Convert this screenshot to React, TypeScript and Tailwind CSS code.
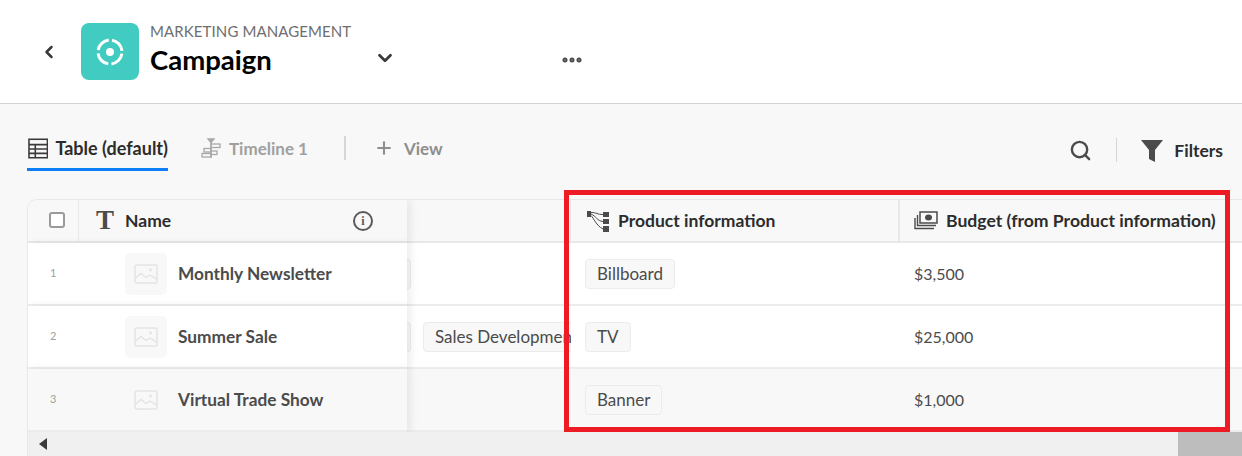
import { ChevronDown, ChevronLeft, Ellipsis, Plus, Search } from "lucide-react";

const font = "font-['Lato','Noto_Sans',sans-serif]";

function TableIcon() {
  return (
    <svg width="21" height="21" viewBox="0 0 21 21" fill="none" stroke="#3a3a3a" strokeWidth="1.6">
      <rect x="1" y="1" width="19" height="19" />
      <path d="M1 6.5h19M1 11h19M1 15.5h19M7.5 6.5V20" />
    </svg>
  );
}

function TimelineIcon() {
  return (
    <svg width="21" height="21" viewBox="0 0 21 21" fill="none" stroke="#a8a8a8" strokeWidth="1.3">
      <path d="M7 1h6l-3 3.5z" fill="#a8a8a8" />
      <path d="M10 4v16" />
      <rect x="10" y="6" width="9" height="3.5" />
      <rect x="3" y="10.5" width="7" height="3.5" />
      <rect x="1" y="15.5" width="9" height="3.5" />
      <rect x="10" y="13" width="6" height="3.5" />
    </svg>
  );
}

function ImagePlaceholder() {
  return (
    <svg width="24" height="20" viewBox="0 0 24 20" fill="none" stroke="#e3e3e3" strokeWidth="1.4">
      <rect x="1" y="1" width="22" height="18" rx="1.5" />
      <path d="M1 14.5l6-5 5 4 4-2.5 7 4.5" />
      <circle cx="16.5" cy="6" r="1.4" fill="#e3e3e3" stroke="none" />
    </svg>
  );
}

function ProductIcon() {
  return (
    <svg width="22" height="22" viewBox="0 0 22 22" fill="none">
      <rect x="0" y="1" width="4" height="6" fill="#4b4b4b" />
      <rect x="16" y="2" width="6" height="5" fill="#4b4b4b" />
      <rect x="16" y="9" width="6" height="5" fill="#4b4b4b" />
      <rect x="16" y="16" width="6" height="6" fill="#4b4b4b" />
      <path d="M4 2.5c6 0 6 2 12 2M4 4c5 2 6 7 12 7.5M4 5.5c3 3 5 10 12 13.5" stroke="#4b4b4b" strokeWidth="1" />
    </svg>
  );
}

function BudgetIcon() {
  return (
    <svg width="24" height="19" viewBox="0 0 24 19" fill="none" stroke="#4b4b4b">
      <rect x="6" y="1" width="17" height="11" strokeWidth="1.5" />
      <ellipse cx="14.5" cy="6.5" rx="3.5" ry="3" fill="#4b4b4b" stroke="none" />
      <path d="M3.5 4v10.5H22M1 7v10.5h19" strokeWidth="1.4" />
    </svg>
  );
}

function Tag({ label }: { label: string }) {
  return (
    <span className="flex h-[30px] shrink-0 items-center whitespace-nowrap rounded-[4px] border border-[#ececec] bg-[#f8f8f8] px-[11px] text-[17px] text-[#4b4b4b]">
      {label}
    </span>
  );
}

const rows = [
  { id: 1, name: "Monthly Newsletter", product: "Billboard", budget: "$3,500", thumb: true, bg: "bg-white", sales: false, stub: true },
  { id: 2, name: "Summer Sale", product: "TV", budget: "$25,000", thumb: true, bg: "bg-white", sales: true, stub: true },
  { id: 3, name: "Virtual Trade Show", product: "Banner", budget: "$1,000", thumb: false, bg: "bg-[#f8f8f8]", sales: false, stub: false },
];

export default function App() {
  return (
    <div className={`relative flex h-[456px] w-[1242px] flex-col overflow-hidden bg-[#f8f8f8] ${font}`}>
      <header className="flex h-[104px] shrink-0 border-b border-[#d3d3d3] bg-white pl-[39px] pt-[23px]">
        <ChevronLeft className="mt-[19px] h-[20px] w-[20px] text-[#3a3a3a]" strokeWidth={3} />
        <div className="ml-[22px] flex h-[57px] w-[58px] items-center justify-center rounded-[8px] bg-[#42ccc1]">
          <svg width="30" height="30" viewBox="0 0 30 30" fill="none" stroke="white" strokeWidth="3">
            <circle cx="15" cy="15" r="12" strokeDasharray="15.5 3.35" strokeDashoffset="-1.7" />
            <circle cx="15" cy="15" r="4" fill="white" stroke="none" />
          </svg>
        </div>
        <div className="ml-[11px] flex w-[220px] flex-col">
          <span className="text-[15px] leading-[16px] tracking-[0.1px] text-[#6e6e6e]">MARKETING MANAGEMENT</span>
          <span className="mt-[5px] text-[27.5px] font-bold leading-[32px] text-black">Campaign</span>
        </div>
        <ChevronDown className="mt-[24px] ml-[4px] h-[22px] w-[22px] text-[#3a3a3a]" strokeWidth={3} />
        <Ellipsis className="mt-[25px] ml-[164px] h-[24px] w-[24px] text-[#4b4b4b]" strokeWidth={3} />
      </header>

      <div className="flex h-[95px] shrink-0 items-start pl-[27px] pr-[19px] pt-[32px]">
        <div className="flex h-[35px] w-[141px] items-start gap-[7px] border-b-[3px] border-[#0d7ef5] pl-[1px] pt-[2px]">
          <TableIcon />
          <span className="whitespace-nowrap text-[18px] font-bold leading-[21px] text-[#2c2c2c]">Table (default)</span>
        </div>
        <div className="ml-[33px] flex items-center gap-[7px] pt-[2px]">
          <TimelineIcon />
          <span className="whitespace-nowrap text-[17px] font-bold leading-[21px] text-[#a0a0a0]">Timeline 1</span>
        </div>
        <div className="ml-[36px] h-[24px] w-[2px] bg-[#d6d6d6]" />
        <Plus className="ml-[28px] mt-[2px] h-[20px] w-[20px] text-[#8e8e8e]" strokeWidth={2.5} />
        <span className="ml-[10px] mt-[2px] text-[17px] font-bold leading-[21px] text-[#8e8e8e]">View</span>
        <div className="flex-1" />
        <Search className="mt-[3px] h-[23px] w-[23px] text-[#4b4b4b]" strokeWidth={2.5} />
        <div className="ml-[24px] mt-[2px] h-[24px] w-[1px] bg-[#d6d6d6]" />
        <svg className="ml-[24px] mt-[4px]" width="22" height="22" viewBox="0 0 22 22" fill="#4b4b4b">
          <path d="M0 0h22l-8 10v12l-6-3V10z" />
        </svg>
        <span className="ml-[11px] mt-[4px] text-[17.5px] font-bold leading-[21px] text-[#2c2c2c]">Filters</span>
      </div>

      <div className="ml-[27px] flex flex-1 flex-col overflow-hidden rounded-tl-[10px] border-l border-t border-[#e8e8e8]">
        <div className="flex h-[43px] shrink-0">
          <div className="relative z-10 flex w-[379px] shrink-0 items-center border-b-2 border-[#e8e8e8] bg-[#f8f8f8] shadow-[4px_0_8px_rgba(0,0,0,0.07)]">
            <div className="flex h-full w-[51px] items-center justify-center border-r border-[#e8e8e8] pl-[8px] pb-[1px]">
              <span className="h-[16px] w-[16px] rounded-[3px] border-2 border-[#9a9a9a] bg-white" />
            </div>
            <span className="ml-[17px] font-['Liberation_Serif',serif] text-[27px] font-bold leading-none text-[#4b4b4b]">T</span>
            <span className="ml-[11px] mt-[1px] text-[17.5px] font-bold text-[#2c2c2c]">Name</span>
            <div className="flex-1" />
            <span className="mr-[34px] flex h-[20px] w-[20px] items-center justify-center rounded-full border-2 border-[#5a5a5a] font-['Liberation_Serif',serif] text-[12px] font-bold leading-none text-[#5a5a5a]">
              i
            </span>
          </div>
          <div className="w-[164px] shrink-0 border-b-2 border-r border-[#e8e8e8]" />
          <div className="flex w-[329px] shrink-0 items-center gap-[9px] border-b-2 border-r-2 border-[#e8e8e8] pl-[16px]">
            <ProductIcon />
            <span className="mt-[1px] whitespace-nowrap text-[17.5px] font-bold text-[#2c2c2c]">Product information</span>
          </div>
          <div className="flex flex-1 items-center gap-[8px] border-b-2 border-[#e8e8e8] pl-[14px]">
            <BudgetIcon />
            <span className="mt-[1px] whitespace-nowrap text-[17.6px] font-bold text-[#2c2c2c]">Budget (from Product information)</span>
          </div>
        </div>

        {rows.map((row) => (
          <div key={row.id} className={`flex h-[63px] shrink-0 ${row.bg}`}>
            <div className={`relative z-10 flex w-[379px] shrink-0 items-center border-b-2 border-[#ececec] shadow-[4px_0_8px_rgba(0,0,0,0.07)] ${row.bg}`}>
              <span className="ml-[22px] w-[75px] text-[11px] text-[#a0a0a0]">{row.id}</span>
              <div className={`flex h-[42px] w-[42px] items-center justify-center rounded-[5px] ${row.thumb ? "bg-[#f8f8f8]" : ""}`}>
                <ImagePlaceholder />
              </div>
              <span className="ml-[11px] whitespace-nowrap text-[17.3px] font-bold text-[#4b4b4b]">{row.name}</span>
            </div>
            <div className="flex w-[164px] shrink-0 items-center overflow-hidden border-b-2 border-[#ececec]">
              {row.stub && <span className="h-[30px] w-[4px] shrink-0 rounded-r-[4px] border border-l-0 border-[#ececec] bg-[#f8f8f8]" />}
              {row.sales && (
                <span className="ml-[12px]">
                  <Tag label="Sales Development" />
                </span>
              )}
            </div>
            <div className="flex w-[329px] shrink-0 items-center border-b-2 border-[#ececec] pl-[14px]">
              <Tag label={row.product} />
            </div>
            <div className="flex flex-1 items-center border-b-2 border-[#ececec] pl-[14px] text-[16px] text-[#4b4b4b]">{row.budget}</div>
          </div>
        ))}

        <div className="relative z-20 flex min-h-0 flex-1 items-center justify-between bg-[#f0f0f0] pl-[11px]">
          <span className="h-0 w-0 border-y-[6px] border-r-[8px] border-y-transparent border-r-[#3a3a3a]" />
          <span className="h-full w-[64px] bg-[#bdbdbd]" />
        </div>
      </div>

      <div className="pointer-events-none absolute left-[564px] top-[190px] z-30 h-[242px] w-[666px] border-[5px] border-[#ed1c24]" />
    </div>
  );
}
